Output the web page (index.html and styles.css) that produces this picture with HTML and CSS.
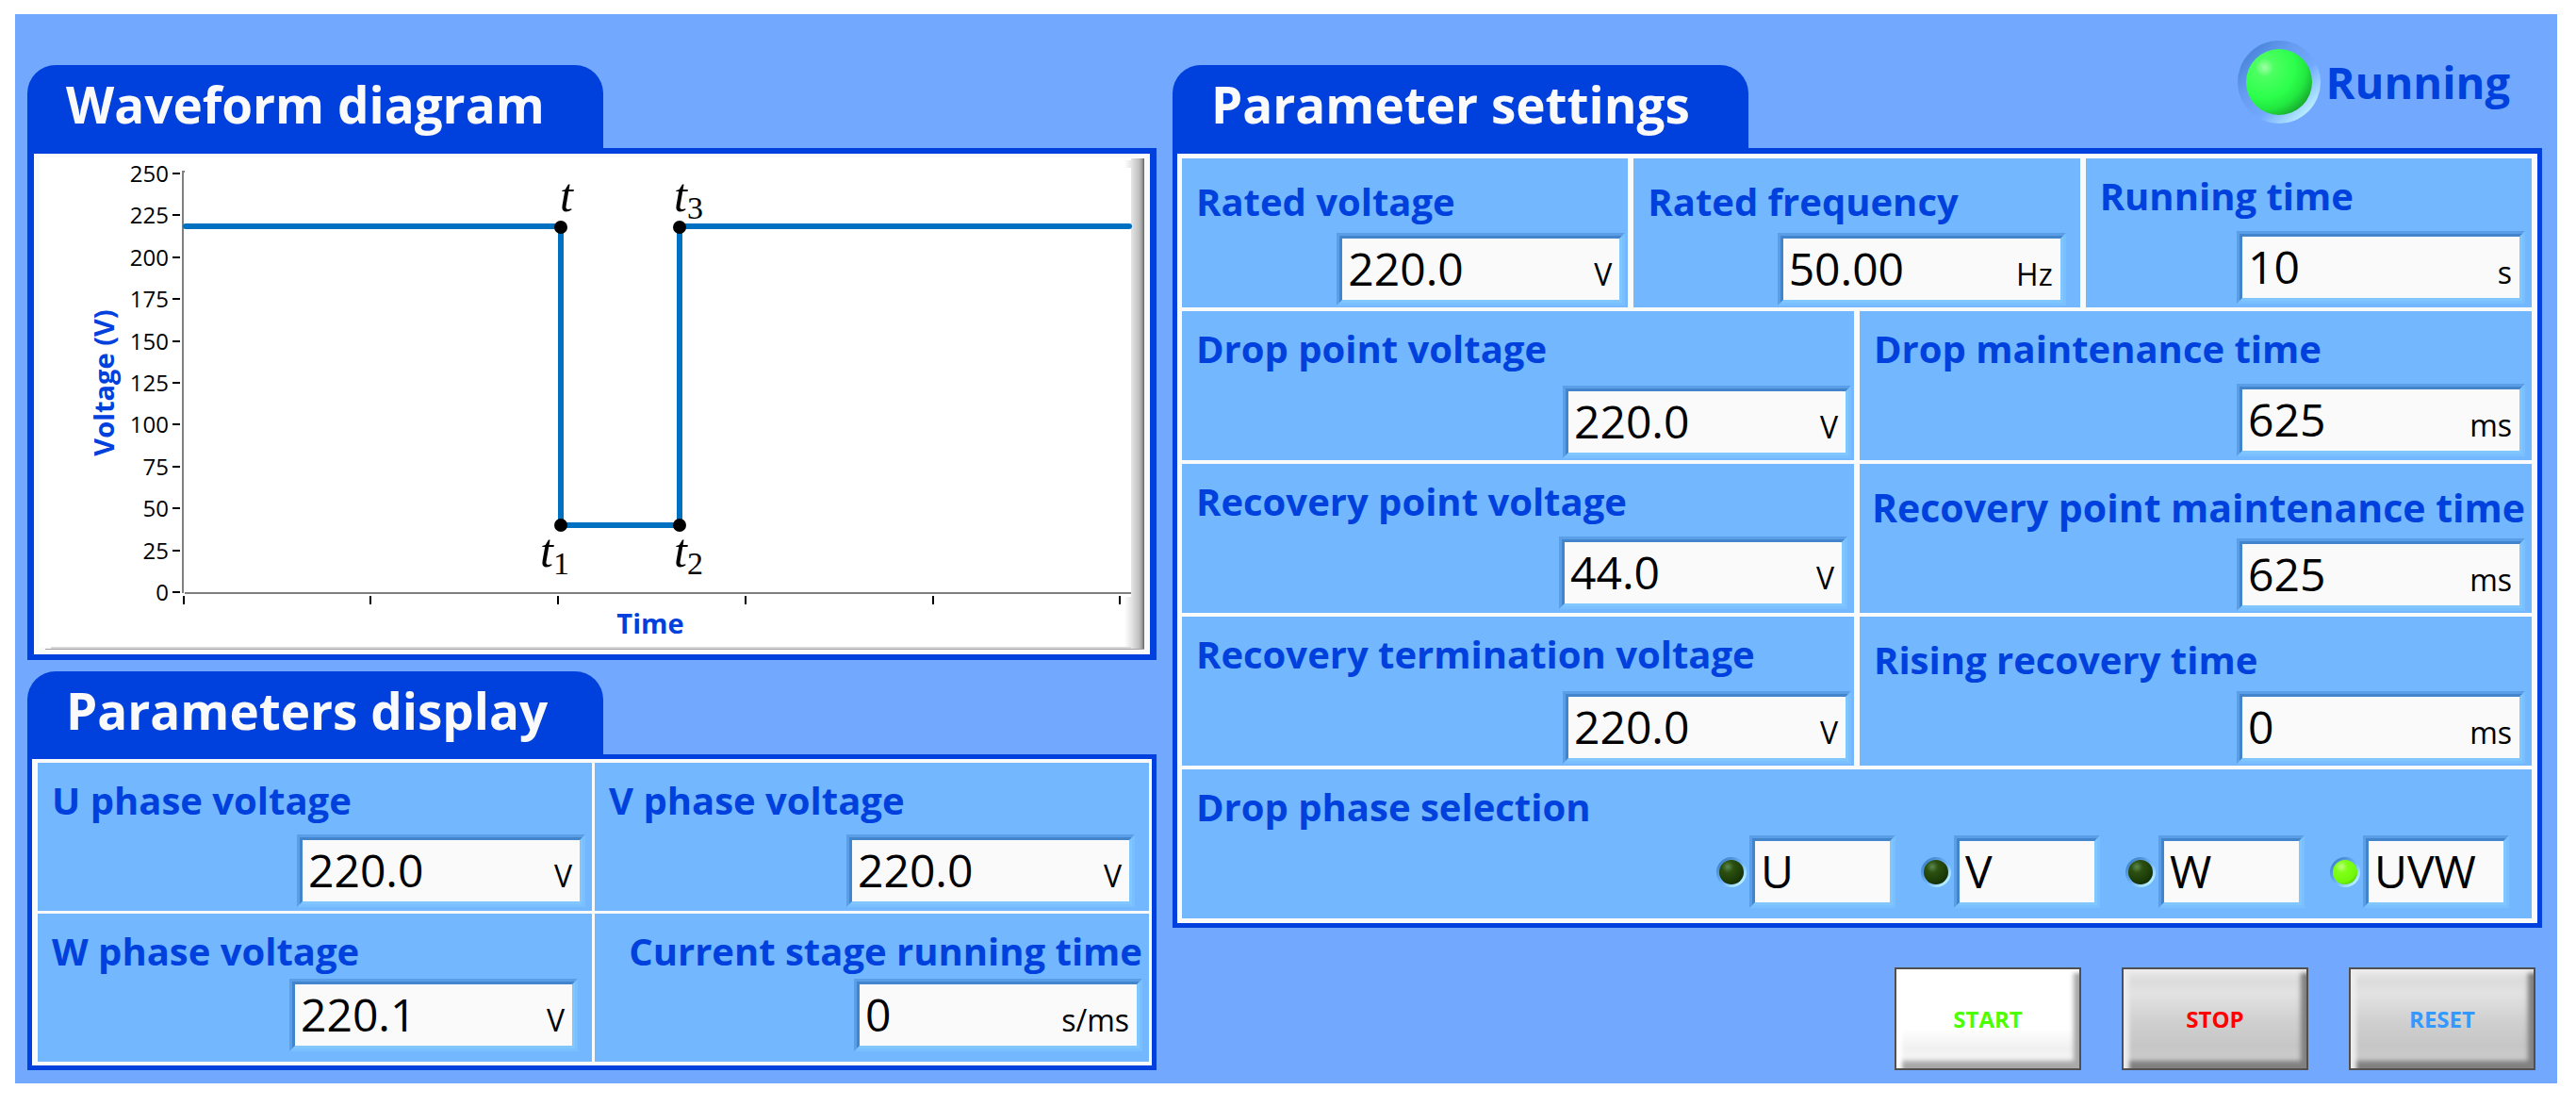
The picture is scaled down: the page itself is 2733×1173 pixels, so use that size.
FILE: index.html
```html
<!DOCTYPE html>
<html lang="en">

<head>
    <meta charset="UTF-8">
    <meta name="viewport" content="width=device-width, initial-scale=1.0">
    <title>Voltage drop test</title>
    <link rel="stylesheet" href="styles.css">
</head>

<body>
    <main class="app">
        <div class="col-left">
            <section>
                <h2 class="tab">Waveform diagram</h2>
                <div class="box box-chart">
                    <svg class="chart" viewBox="0 0 1184 531" role="img" aria-label="Voltage over time">
                        <defs>
                            <linearGradient id="edge">
                                <stop offset="0" stop-color="#e6e6e6" />
                                <stop offset="0.6" stop-color="#c0c0c0" />
                                <stop offset="0.85" stop-color="#989898" />
                                <stop offset="1" stop-color="#606060" />
                            </linearGradient>
                            <linearGradient id="fade">
                                <stop offset="0" stop-color="#fff" />
                                <stop offset="1" stop-color="#e6e6e6" />
                            </linearGradient>
                        </defs>
                        <rect x="6" y="4" width="1172" height="519" fill="#fff" />
                        <rect x="1157" y="7" width="7" height="8" fill="url(#fade)" />
                        <rect x="1157" y="470" width="7" height="54" fill="url(#fade)" />
                        <rect x="1164" y="5" width="14" height="521" fill="url(#edge)" />
                        <rect x="18" y="523" width="1146" height="2" fill="#d8d8d8" />
                        <rect x="12" y="525" width="1166" height="1" fill="#a0a0a0" />
                        <!-- axes -->
                        <path class="axis" d="M160 19h-2V466M160 466H1164" />
                        <path class="tick" d="M147 21h8M147 65h8M147 110h8M147 154h8M147 199h8M147 243h8M147 287h8M147 332h8M147 376h8M147 421h8M147 465h8" />
                        <path class="tick" d="M159 469v9M357 469v9M556 469v9M755 469v9M954 469v9M1152 469v9" />
                        <g class="scale">
                            <text x="143" y="30">250</text>
                            <text x="143" y="74">225</text>
                            <text x="143" y="119">200</text>
                            <text x="143" y="163">175</text>
                            <text x="143" y="208">150</text>
                            <text x="143" y="252">125</text>
                            <text x="143" y="296">100</text>
                            <text x="143" y="341">75</text>
                            <text x="143" y="385">50</text>
                            <text x="143" y="430">25</text>
                            <text x="143" y="474">0</text>
                        </g>
                        <text class="axis-name" x="654" y="509">Time</text>
                        <text class="axis-name" transform="translate(85 243) rotate(-90)">Voltage (V)</text>
                        <!-- waveform -->
                        <path class="wave" d="M161 77H559V394H685V77H1162" />
                        <circle cx="559" cy="78" r="7" />
                        <circle cx="685" cy="78" r="7" />
                        <circle cx="559" cy="394" r="7" />
                        <circle cx="685" cy="394" r="7" />
                        <g class="mark">
                            <text x="558" y="61">t</text>
                            <text x="679" y="61">t<tspan class="sub" dy="8">3</tspan></text>
                            <text x="537" y="438">t<tspan class="sub" dy="8">1</tspan></text>
                            <text x="679" y="438">t<tspan class="sub" dy="8">2</tspan></text>
                        </g>
                    </svg>
                </div>
            </section>

            <section>
                <h2 class="tab">Parameters display</h2>
                <div class="box grid grid-display">
                    <div class="cell">
                        <label for="u-phase">U phase voltage</label>
                        <div class="field"><div class="field-in"><input id="u-phase" type="text" value="220.0" readonly><span class="unit">V</span></div></div>
                    </div>
                    <div class="cell cell-inset">
                        <label for="v-phase">V phase voltage</label>
                        <div class="field"><div class="field-in"><input id="v-phase" type="text" value="220.0" readonly><span class="unit">V</span></div></div>
                    </div>
                    <div class="cell cell-raised cell-inset">
                        <label for="w-phase">W phase voltage</label>
                        <div class="field"><div class="field-in"><input id="w-phase" type="text" value="220.1" readonly><span class="unit">V</span></div></div>
                    </div>
                    <div class="cell cell-raised">
                        <label class="label-end" for="stage-time">Current stage running time</label>
                        <div class="field"><div class="field-in"><input id="stage-time" type="text" value="0" readonly><span class="unit">s/ms</span></div></div>
                    </div>
                </div>
            </section>
        </div>

        <div class="col-right">
            <section>
                <div class="head">
                    <h2 class="tab">Parameter settings</h2>
                    <div class="status">
                        <span class="lamp"></span>
                        <span>Running</span>
                    </div>
                </div>
                <div class="box grid grid-settings">
                    <div class="cell third cell-low cell-tight">
                        <label for="rated-voltage">Rated voltage</label>
                        <div class="field"><div class="field-in"><input id="rated-voltage" type="text" value="220.0"><span class="unit">V</span></div></div>
                    </div>
                    <div class="cell third cell-low cell-inset">
                        <label for="rated-frequency">Rated frequency</label>
                        <div class="field"><div class="field-in"><input id="rated-frequency" type="text" value="50.00"><span class="unit">Hz</span></div></div>
                    </div>
                    <div class="cell third">
                        <label for="running-time">Running time</label>
                        <div class="field"><div class="field-in"><input id="running-time" type="text" value="10"><span class="unit">s</span></div></div>
                    </div>
                    <div class="cell half cell-tight">
                        <label for="drop-voltage">Drop point voltage</label>
                        <div class="field"><div class="field-in"><input id="drop-voltage" type="text" value="220.0"><span class="unit">V</span></div></div>
                    </div>
                    <div class="cell half">
                        <label for="drop-time">Drop maintenance time</label>
                        <div class="field"><div class="field-in"><input id="drop-time" type="text" value="625"><span class="unit">ms</span></div></div>
                    </div>
                    <div class="cell half">
                        <label for="recovery-voltage">Recovery point voltage</label>
                        <div class="field"><div class="field-in"><input id="recovery-voltage" type="text" value="44.0"><span class="unit">V</span></div></div>
                    </div>
                    <div class="cell half cell-low">
                        <label class="label-end label-large" for="recovery-time">Recovery point maintenance time</label>
                        <div class="field"><div class="field-in"><input id="recovery-time" type="text" value="625"><span class="unit">ms</span></div></div>
                    </div>
                    <div class="cell half cell-tight">
                        <label for="end-voltage">Recovery termination voltage</label>
                        <div class="field"><div class="field-in"><input id="end-voltage" type="text" value="220.0"><span class="unit">V</span></div></div>
                    </div>
                    <div class="cell half cell-low">
                        <label for="rising-time">Rising recovery time</label>
                        <div class="field"><div class="field-in"><input id="rising-time" type="text" value="0"><span class="unit">ms</span></div></div>
                    </div>
                    <fieldset class="cell full cell-raised">
                        <legend>Drop phase selection</legend>
                        <div class="phases">
                            <div class="phase"><input id="phase-u" type="radio" name="phase"><label class="field" for="phase-u"><span class="field-in">U</span></label></div>
                            <div class="phase"><input id="phase-v" type="radio" name="phase"><label class="field" for="phase-v"><span class="field-in">V</span></label></div>
                            <div class="phase"><input id="phase-w" type="radio" name="phase"><label class="field" for="phase-w"><span class="field-in">W</span></label></div>
                            <div class="phase"><input id="phase-uvw" type="radio" name="phase" checked><label class="field" for="phase-uvw"><span class="field-in">UVW</span></label></div>
                        </div>
                    </fieldset>
                </div>
            </section>

            <div class="actions">
                <button class="btn btn-start" type="button">START</button>
                <button class="btn btn-stop" type="button">STOP</button>
                <button class="btn btn-reset" type="button">RESET</button>
            </div>
        </div>
    </main>
</body>

</html>
```

FILE: styles.css
```css
* {
    box-sizing: border-box;
}
body {
    margin: 0;
    padding: 15px 20px 23px 16px;
    background-color: #fff;
    font-family: "Open Sans", "Noto Sans", sans-serif;
    color: #000;
}
h2,
fieldset,
legend {
    margin: 0;
    padding: 0;
    border: 0;
}
.app {
    display: grid;
    grid-template-columns: minmax(0, 1198fr) minmax(0, 1453fr);
    column-gap: 17px;
    padding: 0 16px 14px 13px;
    background-color: #72a9ff;
}
.col-left {
    display: flex;
    flex-direction: column;
    gap: 12px;
    padding-top: 54px;
}
.col-right {
    display: flex;
    flex-direction: column;
    justify-content: space-between;
}

/* panels */
.tab {
    width: 611px;
    height: 88px;
    padding-left: 41px;
    border-radius: 30px 30px 0 0;
    background-color: #0041dd;
    color: #fafafa;
    font-size: 53px;
    font-weight: bold;
    line-height: 83px;
    white-space: nowrap;
}
.box {
    border: 5px solid #0041dd;
    background-color: #fafafa;
}
.box-chart {
    border-width: 6px 7px;
}
.head {
    display: flex;
    justify-content: space-between;
    align-items: flex-end;
    padding-top: 28px;
}
.status {
    display: flex;
    align-items: center;
    align-self: flex-start;
    gap: 6px;
    height: 88px;
    margin-bottom: 26px;
    padding-right: 34px;
    color: #0041dd;
    font-size: 47px;
    font-weight: bold;
    line-height: 84px;
}
.lamp {
    display: block;
    width: 88px;
    height: 88px;
    padding: 9px;
    border-radius: 50%;
    background: linear-gradient(135deg, #4682d8 10%, #659cf0 35%, #72a9ff 60%, #c0f4ff 88%);
}
.lamp::before {
    content: "";
    display: block;
    height: 100%;
    border-radius: 50%;
    background: radial-gradient(circle at 28% 28%, #a0ffa8 0, #4cff60 14%, #2cff4c 45%, #22e840 62%, #149828 85%, #0c6018 100%);
}

/* chart */
.chart {
    display: block;
    width: 100%;
    height: auto;
}
.axis {
    fill: none;
    stroke: #808080;
    stroke-width: 2;
}
.tick {
    stroke: #000;
    stroke-width: 2;
}
.scale {
    font-size: 24px;
    text-anchor: end;
}
.axis-name {
    fill: #0041dd;
    font-size: 29px;
    font-weight: bold;
    text-anchor: middle;
}
.wave {
    fill: none;
    stroke: #0070c0;
    stroke-width: 6;
    stroke-linecap: round;
}
.mark {
    font-family: "Liberation Serif", serif;
    font-size: 50px;
    font-style: italic;
}
.sub {
    font-size: 34px;
    font-style: normal;
}

/* cells */
.grid {
    display: grid;
    grid-auto-rows: minmax(158px, auto);
}
.grid-display {
    grid-template-columns: 1fr 1fr;
    grid-auto-rows: minmax(157px, auto);
    gap: 3px;
    padding: 4px 3px 4px 6px;
}
.grid-settings {
    grid-template-columns: repeat(6, minmax(0, 1fr));
    gap: 4px 6px;
    padding: 5px 6px 5px 5px;
    border-top-width: 6px;
}
.third {
    grid-column: span 2;
}
.half {
    grid-column: span 3;
}
.full {
    grid-column: span 6;
}
.cell {
    display: flex;
    flex-direction: column;
    justify-content: space-between;
    padding: 20px 7px 4px 15px;
    background-color: #73b7ff;
    color: #0041dd;
}
.cell > label,
.cell > legend {
    float: left;
    font-size: 40px;
    font-weight: bold;
    line-height: 40px;
    white-space: nowrap;
}
.cell > .label-end {
    align-self: flex-end;
}
.cell > .label-large {
    font-size: 41px;
}
.cell-low {
    padding-top: 26px;
    padding-bottom: 2px;
}
.cell-raised {
    padding-bottom: 11px;
}
.cell-tight {
    padding-right: 3px;
    padding-bottom: 2px;
}
.cell-inset {
    padding-right: 15px;
}

/* sunken fields */
.field {
    align-self: flex-end;
    width: 306px;
    max-width: 100%;
    border: 3px solid;
    border-color: #5a9ee8 #7abfff #7abfff #5a9ee8;
}
.field-in {
    display: flex;
    align-items: baseline;
    height: 71px;
    padding: 0 8px 0 6px;
    border: 3px solid;
    border-color: #4285cd #80c6ff #80c6ff #4285cd;
    background-color: #fafafa;
    color: #000;
    font-size: 48px;
    line-height: 64px;
}
.field input {
    flex: 1;
    min-width: 0;
    height: 64px;
    padding: 0;
    border: 0;
    background: none;
    color: inherit;
    font: inherit;
}
.unit {
    font-size: 32px;
}

/* phase selection */
.phases {
    display: flex;
    justify-content: flex-end;
    gap: 27px;
    padding-right: 17px;
}
.phase {
    display: flex;
    align-items: center;
    gap: 3px;
}
.phase .field {
    width: 155px;
}
.phase input {
    appearance: none;
    width: 32px;
    height: 32px;
    margin: 0;
    border: 3px solid transparent;
    border-radius: 50%;
    background: radial-gradient(circle at 35% 28%, #5c8a50 0, #2c5010 25%, #1c3c08 60%, #081c00 100%) padding-box,
        linear-gradient(135deg, #4285cd 15%, #73b7ff 55%, #c0f8ff 88%) border-box;
}
.phase input:checked {
    background: radial-gradient(circle at 35% 28%, #c0ff80 0, #80ff18 25%, #70f808 65%, #3c9800 100%) padding-box,
        linear-gradient(135deg, #4285cd 15%, #73b7ff 55%, #c0f8ff 88%) border-box;
}

/* buttons */
.actions {
    display: flex;
    justify-content: flex-end;
    gap: 43px;
    padding-right: 7px;
}
.btn {
    width: 198px;
    height: 109px;
    padding: 0;
    border: 2px solid #505050;
    background: linear-gradient(#e8e8e8 0, #dcdcdc 12%, #e2e2e2 25%, #d0d0d0 52%, #c6c6c6 78%, #d0d0d0 100%);
    box-shadow: inset 6px 4px 4px #ececec, inset -6px -8px 5px #808080;
    font-family: inherit;
    font-size: 24px;
    font-weight: bold;
}
.btn-start {
    background: linear-gradient(#fff 60%, #f0f0f0 80%, #fafafa 100%);
    box-shadow: inset 6px 4px 4px #fff, inset -6px -8px 5px #a8a8a8;
    color: #4cff00;
}
.btn-stop {
    color: #ff0000;
}
.btn-reset {
    color: #3399ff;
}
```
